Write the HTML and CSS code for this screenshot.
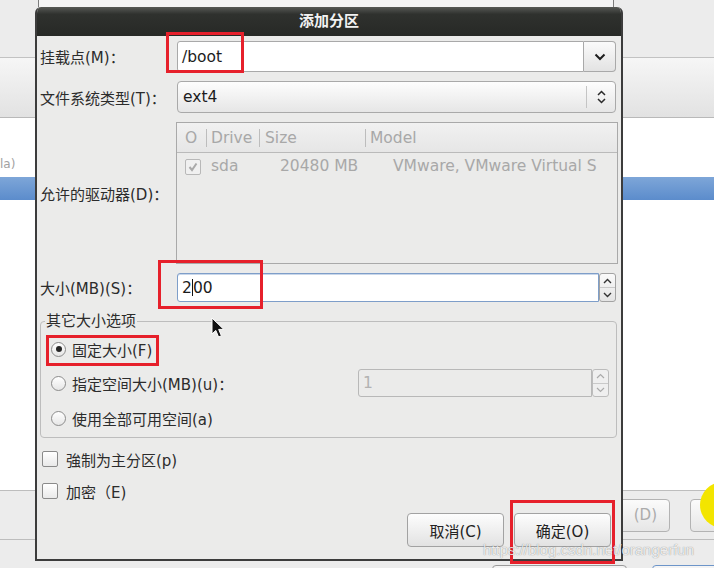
FILE: index.html
```html
<!DOCTYPE html>
<html lang="zh-CN">
<head>
  <meta charset="UTF-8" />
  <title>添加分区</title>
  <link rel="stylesheet" href="styles.css">
</head>
<body>

<!-- installer window behind the dialog -->
<div class="desk">
  <div class="bg-top"><div class="bg-win"></div></div>
  <div class="bg-toolbar"></div>
  <div class="bg-list">
    <div class="bg-row">la)</div>
    <div class="bg-row sel"></div>
  </div>
  <div class="bg-bar">
    <button class="bg-btn off">(D)</button>
    <button class="bg-btn"></button>
  </div>
  <div class="bg-bar2">
    <button class="bg-btn2"></button>
    <button class="bg-btn2 blue"></button>
  </div>
</div>

<div class="dialog">
  <div class="dlg-title">添加分区</div>
  <div class="dlg-body">
    <div class="form">
      <label>挂载点(M)：</label>
      <div class="combo-entry">
        <div class="entry">/boot</div>
        <div class="drop">
          <svg width="12" height="8" viewBox="0 0 12 8"><path d="M1.5 1.5 L6 6 L10.5 1.5" fill="none" stroke="#1e1e1e" stroke-width="2"/></svg>
        </div>
      </div>

      <label>文件系统类型(T)：</label>
      <div class="combo">
        <span class="combo-text">ext4</span>
        <span class="sep"></span>
        <svg width="9" height="16" viewBox="0 0 9 16"><path d="M1 6 L4.5 2.5 L8 6 M1 10 L4.5 13.5 L8 10" fill="none" stroke="#2a2a2a" stroke-width="1.5"/></svg>
      </div>

      <label>允许的驱动器(D)：</label>
      <div class="drives">
        <div class="th">
          <span class="c0">O</span>
          <span class="c1 colsep">Drive</span>
          <span class="c2 colsep">Size</span>
          <span class="c3 colsep">Model</span>
        </div>
        <div class="tr">
          <span class="c0">
            <span class="check dis">
              <svg width="12" height="12" viewBox="0 0 12 12"><path d="M2.5 6 L5 9 L9.5 2.5" fill="none" stroke="#a9a9a9" stroke-width="2"/></svg>
            </span>
          </span>
          <span class="c1">sda</span>
          <span class="c2 num">20480 MB</span>
          <span class="c3 model">VMware, VMware Virtual S</span>
        </div>
      </div>

      <label>大小(MB)(S)：</label>
      <div class="spin">
        <div class="entry focus">2<i class="caret"></i>00</div>
        <div class="arrows">
          <span><svg width="9" height="6" viewBox="0 0 9 6"><path d="M1 5 L4.5 1.5 L8 5" fill="none" stroke="#333" stroke-width="1.4"/></svg></span>
          <span><svg width="9" height="6" viewBox="0 0 9 6"><path d="M1 1 L4.5 4.5 L8 1" fill="none" stroke="#333" stroke-width="1.4"/></svg></span>
        </div>
      </div>
    </div>

    <fieldset class="sizes">
      <legend>其它大小选项</legend>
      <div class="opt"><span class="radio on"></span>固定大小(F)</div>
      <div class="opt">
        <span class="radio"></span>指定空间大小(MB)(u)：
        <div class="spin off">
          <div class="entry">1</div>
          <div class="arrows">
            <span><svg width="9" height="6" viewBox="0 0 9 6"><path d="M1 5 L4.5 1.5 L8 5" fill="none" stroke="#aaa" stroke-width="1.2"/></svg></span>
            <span><svg width="9" height="6" viewBox="0 0 9 6"><path d="M1 1 L4.5 4.5 L8 1" fill="none" stroke="#aaa" stroke-width="1.2"/></svg></span>
          </div>
        </div>
      </div>
      <div class="opt last"><span class="radio"></span>使用全部可用空间(a)</div>
    </fieldset>

    <div class="checks">
      <div class="chk-row"><span class="check"></span>強制为主分区(p)</div>
      <div class="chk-row"><span class="check"></span>加密（E)</div>
    </div>

    <div class="actions">
      <button class="btn">取消(C)</button>
      <button class="btn">确定(O)</button>
    </div>
  </div>
</div>

<!-- annotations drawn over the screenshot -->
<div class="mark m1"></div>
<div class="mark m2"></div>
<div class="mark m3"></div>
<div class="mark m4"></div>
<div class="glow"></div>
<svg class="pointer" width="15" height="22" viewBox="0 0 15 22"><path d="M1 1 L1 17 L4.8 13.4 L7.6 20 L10.4 18.8 L7.7 12.4 L12.8 12.4 Z" fill="#111" stroke="#fff" stroke-width="1"/></svg>
<div class="watermark">https://blog.csdn.net/orangerfun</div>

</body>
</html>
```

FILE: styles.css
```css
body {
  margin: 0;
  width: 714px;
  height: 568px;
  overflow: hidden;
  position: relative;
  background: #ececec;
  font-family: "DejaVu Sans", "Noto Sans CJK SC", sans-serif;
  font-size: 15px;
  color: #2c2c2c;
}

/* ---- background window ---- */
.bg-top {
  height: 57px;
  background: #ececec;
}
.bg-win {
  margin-left: 38px;
  width: 574px;
  height: 7px;
  background: #f4f4f4;
  border-left: 1px solid #7c7c7c;
  border-right: 1px solid #7c7c7c;
}
.bg-toolbar {
  height: 59px;
  border-top: 1px solid #c2c2c2;
  border-bottom: 1px solid #b9b9b9;
  background: linear-gradient(#f6f6f6, #e2e2e2);
}
.bg-list {
  height: 372px;
  background: #fff;
  padding-top: 36px;
  box-sizing: border-box;
}
.bg-row {
  height: 20px;
  line-height: 20px;
  font-size: 12px;
  color: #a2a2a2;
  white-space: nowrap;
}
.bg-row.sel {
  margin-top: 3px;
  height: 23px;
  background: linear-gradient(#7ea6d8, #5b8ccc);
}
.bg-bar {
  height: 48px;
  border-top: 1px solid #bdbdbd;
  border-bottom: 1px solid #bdbdbd;
  display: flex;
  align-items: center;
  gap: 20px;
  padding-left: 588px;
}
.bg-btn {
  width: 82px;
  height: 33px;
  border: 1px solid #b3b3b3;
  border-radius: 4px;
  background: linear-gradient(#fbfbfb, #e6e6e6);
  font-family: inherit;
  font-size: 15px;
  flex-shrink: 0;
}
.bg-btn.off {
  color: #ababab;
  text-align: right;
  padding-right: 12px;
}
.bg-bar2 {
  display: flex;
  gap: 25px;
  padding: 25px 0 0 492px;
}
.bg-btn2 {
  width: 135px;
  height: 30px;
  border: 1px solid #9a9a9a;
  border-radius: 4px;
  background: #f4f4f4;
  flex-shrink: 0;
}
.bg-btn2.blue { border-color: #6d95c9; }

/* ---- dialog ---- */
.dialog {
  position: absolute;
  left: 35px;
  top: 7px;
  width: 588px;
  height: 554px;
  box-sizing: border-box;
  background: #ebebea;
  border: 2px solid #3c3c3c;
  border-top: none;
  border-radius: 6px 6px 0 0;
  overflow: hidden;
}
.dlg-title {
  height: 29px;
  line-height: 29px;
  text-align: center;
  color: #f2f2f2;
  font-weight: bold;
  font-size: 15px;
  background: linear-gradient(#575955, #2f312e 25%, #272926);
}
.dlg-body {
  padding: 5px 5px 0 3px;
}
.form {
  display: grid;
  grid-template-columns: 137px 1fr;
  grid-template-rows: 31px 32px 142px 29px;
  row-gap: 9px;
  align-items: center;
}
.form > * { height: 100%; box-sizing: border-box; }
.form label {
  display: flex;
  align-items: center;
  white-space: nowrap;
}

.combo-entry { display: flex; }
.entry {
  flex: 1;
  background: #fff;
  border: 1px solid #a9a9a9;
  border-radius: 3px 0 0 3px;
  padding-left: 4px;
  display: flex;
  align-items: center;
  font-size: 15.5px;
  color: #1c1c1c;
}
.drop {
  width: 31px;
  border: 1px solid #a9a9a9;
  border-left: none;
  border-radius: 0 4px 4px 0;
  background: linear-gradient(#fafafa, #e3e3e3);
  display: flex;
  align-items: center;
  justify-content: center;
}

.combo {
  display: flex;
  align-items: center;
  border: 1px solid #a9a9a9;
  border-radius: 4px;
  background: linear-gradient(#fdfdfd, #e6e6e6);
  padding: 0 9px 0 5px;
  font-size: 15.5px;
  color: #1c1c1c;
}
.combo-text { flex: 1; }
.combo .sep {
  width: 1px;
  height: 22px;
  background: #c4c4c4;
  margin-right: 10px;
}

.drives {
  border: 1px solid #a9a9a9;
  margin-left: -1px;
  margin-right: -2px;
  color: #a8a8a8;
  font-size: 15.5px;
}
.th, .tr { display: flex; align-items: center; }
.th {
  height: 29px;
  border-bottom: 1px solid #bababa;
  background: linear-gradient(#f1f1f1, #e6e6e6);
}
.tr { height: 26px; }
.c0 { width: 29px; padding-left: 8px; box-sizing: border-box; }
.c1 { width: 53px; padding-left: 4px; box-sizing: border-box; }
.c2 { width: 106px; padding-left: 5px; box-sizing: border-box; }
.c3 { flex: 1; padding-left: 4px; white-space: nowrap; overflow: hidden; }
.colsep { border-left: 1px solid #bdbdbd; line-height: 18px; }
.tr .c1 { padding-left: 5px; }
.tr .num { padding-left: 21px; white-space: nowrap; }
.tr .model { padding-left: 28px; }

.check {
  display: inline-flex;
  align-items: center;
  justify-content: center;
  width: 14px;
  height: 14px;
  border: 1px solid #8a8a8a;
  border-radius: 2px;
  background: linear-gradient(#ffffff, #e9e9e9);
  vertical-align: middle;
}
.check.dis { border-color: #b8b8b8; background: #f0f0f0; }

.spin { display: flex; }
.entry.focus {
  border-color: #7e9ec9;
  border-radius: 3px 0 0 3px;
  box-shadow: inset 0 1px 0 #c9d7ea;
}
.caret {
  display: inline-block;
  width: 1px;
  height: 17px;
  background: #111;
}
.arrows {
  width: 15px;
  display: flex;
  flex-direction: column;
  border: 1px solid #a3a3a3;
  border-radius: 3px;
  background: linear-gradient(#fafafa, #e4e4e4);
}
.arrows span {
  flex: 1;
  display: flex;
  align-items: center;
  justify-content: center;
}
.arrows span + span { border-top: 1px solid #c9c9c9; }

/* ---- size options ---- */
.sizes {
  margin: 10px -1px 0 0;
  padding: 2px 0 1px 9px;
  border: 1px solid #bdbdbd;
  border-radius: 4px;
  min-width: 0;
}
.sizes legend {
  margin-left: -5px;
  padding: 0 1px;
  line-height: 18px;
}
.opt {
  height: 34px;
  display: flex;
  align-items: center;
  white-space: nowrap;
}
.opt.last { height: 36px; }
.radio {
  width: 13px;
  height: 13px;
  border: 1px solid #8c8c8c;
  border-radius: 50%;
  background: linear-gradient(#ffffff, #e6e6e6);
  margin: 0 6px 0 1px;
  display: flex;
  align-items: center;
  justify-content: center;
  flex-shrink: 0;
}
.radio.on::after {
  content: "";
  width: 6px;
  height: 6px;
  border-radius: 50%;
  background: #262626;
}
.spin.off {
  margin-left: auto;
  margin-right: 7px;
  width: 251px;
  height: 28px;
}
.spin.off .entry {
  background: #ebebea;
  border-color: #b8b8b8;
  color: #b2b2b2;
}
.spin.off .arrows {
  border-color: #bcbcbc;
  background: #efefef;
}

/* ---- checkboxes & buttons ---- */
.checks { margin-top: 5px; }
.chk-row {
  height: 32px;
  display: flex;
  align-items: center;
  gap: 8px;
  padding-left: 2px;
}
.actions {
  display: flex;
  justify-content: flex-end;
  gap: 10px;
  margin: 6px 5px 0 0;
}
.btn {
  width: 97px;
  height: 34px;
  border: 1px solid #a2a2a2;
  border-radius: 4px;
  background: linear-gradient(#fdfdfd, #e2e2e2);
  font-family: inherit;
  font-size: 15px;
  color: #222;
}

/* ---- overlays ---- */
.mark {
  position: absolute;
  border: 3px solid #e6202b;
  box-sizing: border-box;
}
.m1 { left: 166px; top: 32px; width: 78px; height: 41px; }
.m2 { left: 158px; top: 260px; width: 105px; height: 49px; }
.m3 { left: 46px; top: 335px; width: 113px; height: 31px; }
.m4 { left: 510px; top: 500px; width: 105px; height: 64px; }
.glow {
  position: absolute;
  left: 700px;
  top: 482px;
  width: 46px;
  height: 46px;
  border-radius: 50%;
  background: #f3e500;
}
.pointer {
  position: absolute;
  left: 211px;
  top: 317px;
}
.watermark {
  position: absolute;
  left: 483px;
  top: 541px;
  font-family: "Liberation Sans", sans-serif;
  font-size: 15px;
  color: rgba(255, 255, 255, 0.85);
  text-shadow: 0 0 1px rgba(0, 0, 0, 0.5);
}
```
